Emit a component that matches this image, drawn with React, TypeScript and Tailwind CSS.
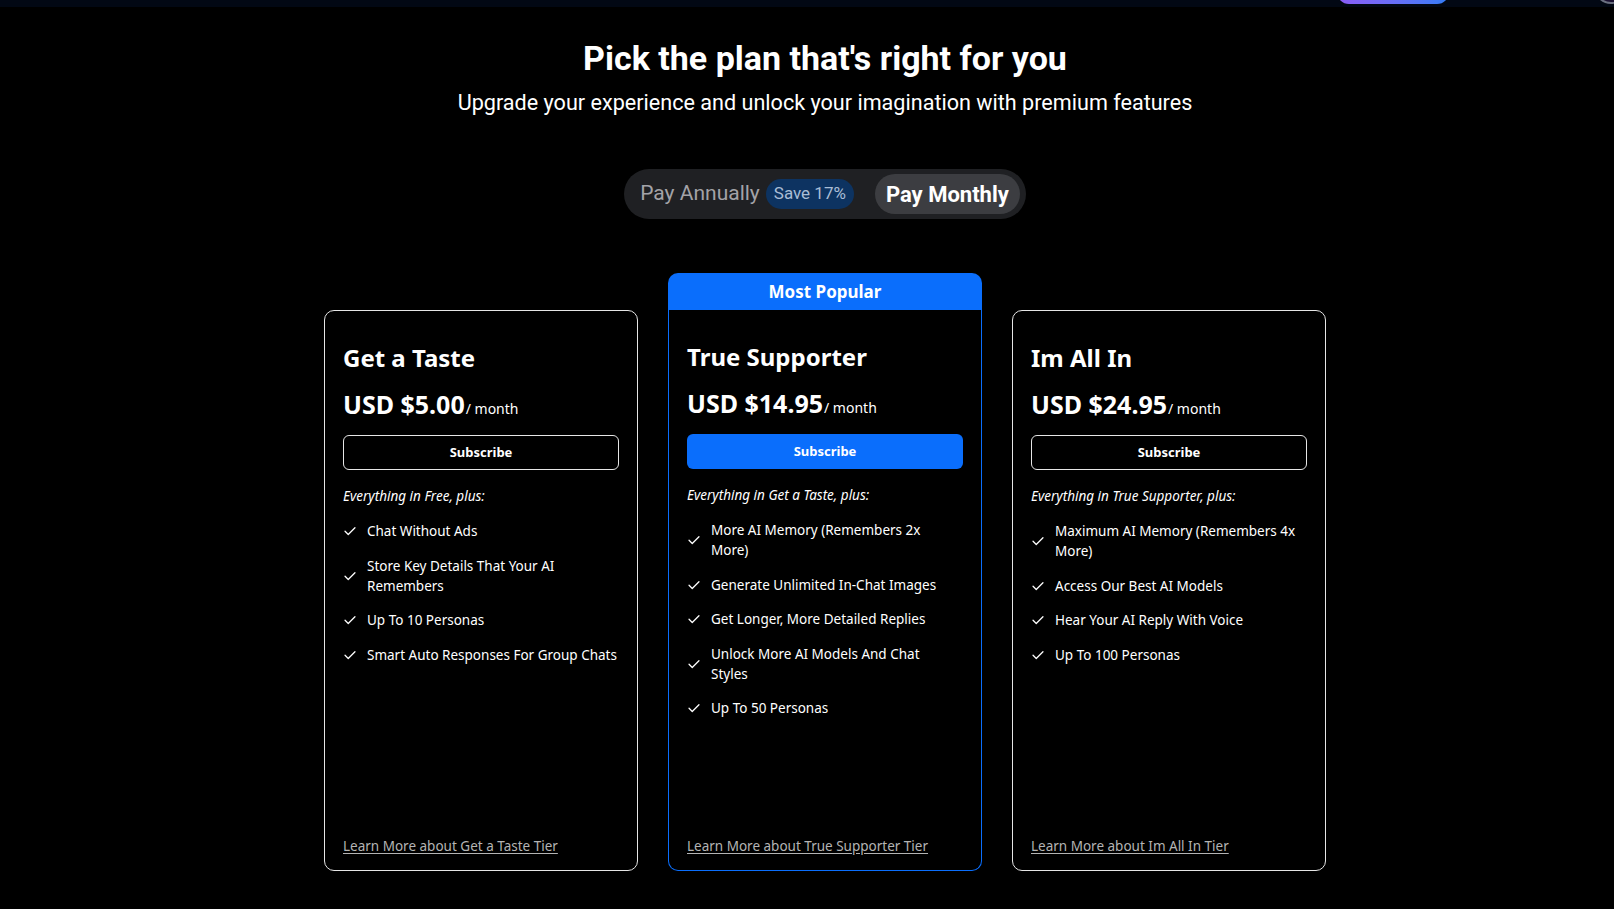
import React from "react";

const plans = [
  {
    name: "Get a Taste",
    price: "USD $5.00",
    intro: "Everything in Free, plus:",
    features: [
      "Chat Without Ads",
      "Store Key Details That Your AI Remembers",
      "Up To 10 Personas",
      "Smart Auto Responses For Group Chats",
    ],
    link: "Learn More about Get a Taste Tier",
    popular: false,
  },
  {
    name: "True Supporter",
    price: "USD $14.95",
    intro: "Everything in Get a Taste, plus:",
    features: [
      "More AI Memory (Remembers 2x More)",
      "Generate Unlimited In-Chat Images",
      "Get Longer, More Detailed Replies",
      "Unlock More AI Models And Chat Styles",
      "Up To 50 Personas",
    ],
    link: "Learn More about True Supporter Tier",
    popular: true,
  },
  {
    name: "Im All In",
    price: "USD $24.95",
    intro: "Everything in True Supporter, plus:",
    features: [
      "Maximum AI Memory (Remembers 4x More)",
      "Access Our Best AI Models",
      "Hear Your AI Reply With Voice",
      "Up To 100 Personas",
    ],
    link: "Learn More about Im All In Tier",
    popular: false,
  },
];

function Check() {
  return (
    <svg width="14" height="14" viewBox="0 0 24 24" fill="none" stroke="#ffffff" strokeWidth="2.2" strokeLinecap="round" strokeLinejoin="round" className="shrink-0">
      <path d="M3.5 12.5l5.5 5.5L20.5 6.5" />
    </svg>
  );
}

function Card({ plan }: { plan: (typeof plans)[number] }) {
  const body = (
    <div
      className={
        plan.popular
          ? "flex h-[561px] flex-col border border-t-0 border-[#0a6efc] rounded-b-[10px] px-[18px] pt-[31px] pb-[14px]"
          : "flex h-[561px] flex-col border border-[#e6e6e6] rounded-[10px] px-[18px] pt-[31px] pb-[14px]"
      }
    >
      <div className="text-[24px] font-bold leading-[32px] text-white">{plan.name}</div>
      <div className="mt-[14px] flex items-baseline text-white">
        <span className="text-[25px] font-bold leading-[32px]">{plan.price}</span>
        <span className="text-[14px] ml-[1px]">/ month</span>
      </div>
      <button
        className={
          plan.popular
            ? "mt-[15px] h-[35px] w-full rounded-[6px] bg-[#0a6efc] text-[13px] font-bold text-white"
            : "mt-[15px] h-[35px] w-full rounded-[6px] border border-[#e6e6e6] text-[13px] font-bold text-white"
        }
      >
        Subscribe
      </button>
      <div className="mt-[16px] text-[13.5px] italic leading-[20px] text-white">{plan.intro}</div>
      <ul className="mt-[15px] flex flex-col gap-[14.5px]">
        {plan.features.map((f) => (
          <li key={f} className="flex items-center gap-[10px] text-[13.5px] leading-[20px] text-white">
            <Check />
            <span className={plan.popular ? "max-w-[236px]" : ""}>{f}</span>
          </li>
        ))}
      </ul>
      <a className="mt-auto text-[13.5px] leading-[20px] text-[#b4b4b4] underline underline-offset-2">{plan.link}</a>
    </div>
  );
  if (!plan.popular) return <div className="w-[314px]">{body}</div>;
  return (
    <div className="w-[314px]">
      <div className="flex h-[37px] items-center justify-center rounded-t-[10px] bg-[#0a6efc] text-[17px] font-bold text-white">
        Most Popular
      </div>
      {body}
    </div>
  );
}

export default function App() {
  return (
    <div className="min-h-[909px] w-full bg-black" style={{ fontFamily: "'Noto Sans', 'Open Sans', sans-serif" }}>
      <div className="flex h-[7px] items-end justify-end overflow-hidden bg-[#020814]">
        <div className="mb-[3px] mr-[145px] h-[40px] w-[112px] shrink-0 rounded-[12px] bg-gradient-to-r from-[#8b5cf6] to-[#2f7cf6]" />
        <div className="mb-[3px] mr-[-14px] h-[34px] w-[34px] shrink-0 rounded-full border-2 border-[#6b7080] bg-[#1a1030]" />
      </div>
      <div className="flex flex-col items-center pl-[36px]">
        <h1 className="mt-[30px] text-[34px] font-bold leading-[42px] text-white" style={{ fontFamily: "Roboto, sans-serif" }}>
          Pick the plan that's right for you
        </h1>
        <p className="mt-[10px] text-[21.6px] leading-[28px] text-white" style={{ fontFamily: "Roboto, sans-serif" }}>
          Upgrade your experience and unlock your imagination with premium features
        </p>
        <div className="mt-[52px] flex h-[50px] items-center rounded-full bg-[#1f2023] pl-[5px] pr-[6px]" style={{ fontFamily: "Roboto, sans-serif" }}>
          <div className="flex items-center pl-[11px]">
            <span className="text-[21px] text-[#a3a3a8]">Pay Annually</span>
            <span className="ml-[6px] flex h-[30px] items-center rounded-full bg-[#0d3361] px-[8px] text-[17px] text-[#a9bdd6]">Save 17%</span>
          </div>
          <div className="ml-[21px] flex h-[40px] items-center rounded-full bg-[#3c3d41] px-[11px] text-[22px] font-bold text-white">
            Pay Monthly
          </div>
        </div>
        <div className="mt-[54px] flex items-end gap-[30px]">
          {plans.map((p) => (
            <Card key={p.name} plan={p} />
          ))}
        </div>
      </div>
    </div>
  );
}
